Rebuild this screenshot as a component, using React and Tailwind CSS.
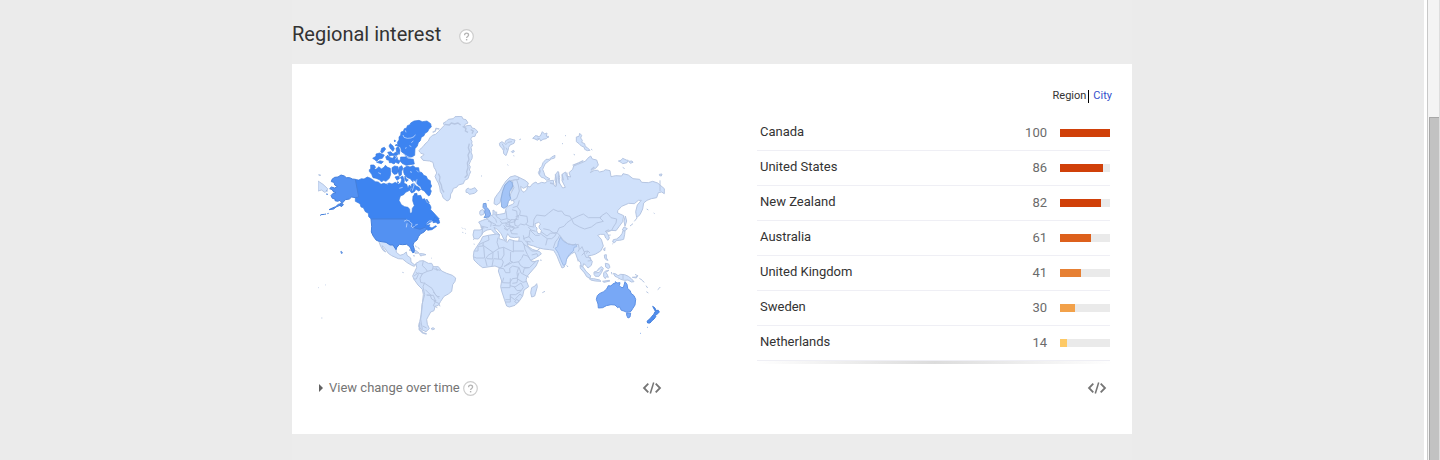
import React from "react";

const regions = [
  { name: "Canada", value: 100, color: "bg-[#d04009]" },
  { name: "United States", value: 86, color: "bg-[#d04009]" },
  { name: "New Zealand", value: 82, color: "bg-[#d04009]" },
  { name: "Australia", value: 61, color: "bg-[#dd601c]" },
  { name: "United Kingdom", value: 41, color: "bg-[#e68034]" },
  { name: "Sweden", value: 30, color: "bg-[#f2a14a]" },
  { name: "Netherlands", value: 14, color: "bg-[#fdc966]" },
];

function HelpButton({ label }) {
  return (
    <button type="button" aria-label={label} className="block shrink-0 cursor-pointer">
      <svg className="size-[15px]" viewBox="0 0 15 15" fill="none">
        <circle cx="7.5" cy="7.5" r="6.8" fill="#fff" stroke="#cdcdcd" strokeWidth="1.2" />
        <path d="M5.6 6.2c0-2.7 4-2.5 4-.3 0 1.5-2 1.5-2 3" stroke="#b3b3b3" strokeWidth="1.3" />
        <path d="M7.6 10v1.4" stroke="#b3b3b3" strokeWidth="1.4" />
      </svg>
    </button>
  );
}

function EmbedButton() {
  return (
    <button type="button" aria-label="Embed" className="block cursor-pointer">
      <svg className="h-3 w-5" viewBox="0 0 20 12" fill="none" stroke="#757575" strokeWidth="1.8">
        <path d="M6.3 1.6 2 6l4.3 4.4M13.7 1.6 18 6l-4.3 4.4" />
        <path d="M11.7.6 8.3 11.4" strokeWidth="1.5" />
      </svg>
    </button>
  );
}

function WorldMap() {
  return (
    <svg
      className="block h-[220px] w-full"
      viewBox="24 15 1050 660"
      role="img"
      aria-label="Interest by country"
      fill="#d0e1fb"
      stroke="#b6c6e2"
      strokeWidth="3"
      strokeLinejoin="round"
    >
      <defs>
        <filter id="coast" x="-5%" y="-5%" width="110%" height="110%">
          <feTurbulence type="fractalNoise" baseFrequency="0.25" numOctaves="2" seed="4" />
          <feDisplacementMap in="SourceGraphic" scale="4" xChannelSelector="R" yChannelSelector="G" />
        </filter>
      </defs>

      {/* Greenland, Iceland, Svalbard */}
      <g transform="translate(270 -2)" filter="url(#coast)">
        <path d="M133 45l-3-7 8-4 7-7 15-2 5-6 20-1 4 8 9 2 6 10-9 4-2 7 8-3 11-1 4 8 9 2 9 10-6 4-3 9-8 1-5 7 4 7-1 8 3 3-5 8 2 8-2 5 4 10-1 10-4 6-5 12 4 6-3 10 4 5-4 9-4 12-10 5-4 10-15 4-5 7-10 3-3 10-5 7-1 12-4 6-6 3-12-10-3-10-5-8-2-14-4-12-5-8-5-12 5-10-3-9-5-8-3-15-10-4-20-2-7-10 6-3 4-5-9-3-4-4-2-4 7-8 6-5 5-7 10-9 4-9 8-8 10-3 8-8z" />
        <path fill="none" strokeWidth="4" d="M115 190l5 10-2 12 6 12 2 12 6 10M208 100l-3 12 4 12-5 10 3 14-5 10 2 14-4 12 2 10-8 8M134 42l14 2 6-6 10 3 10-3 8 6M98 66l8-4 2-8 10 2M188 48l10 6-2 8 8 4M212 58l8 4-4 8" />
        <path d="M198 238l7-5 4 4 6-1 10-4 7 10-9 7-15 3-4-5-6-1zM298 99l8-5 8 6 3-9 12-6 10 3 6 1-3 10-12 5-4 7-2 9-6 16-7-6-1-10-5-8-5-4zM334 124l7-4 2 4-6 3zM358 88l5-2M340 136l3 1M322 163l3 2M243 196l3 2M400 82l12-6 8 8-8 6zM415 187l4-8v16z" />
        <path fill="none" d="M306 100l6 10 0 10M316 104l8-8 12-2M318 112l4 8" />
      </g>

      {/* Eurasian mainland */}
      <path d="M625 198l20 10 10 8-3 10-12 6-8-6 2 12 8 6 8-8 3-10 7 2 8-10 10-5 5 6 12-5 10 2 8-6 17-2 2 14 5 6 2-10-4-10 2-18 7-9 5 18-2 15 11 17 8-2-10-20 1-20 10-6 2 12 13 3-5-13 11-10 3-10 12-5 10-4 14-6 6-8 9-7 5 9 13 3 5 15-8 10-8 3-8 10 12-7 10 0 6 5 12-3 5-4 14 3 3 18 14-3 18 1 4-7 16 4 14 11 20 2 6 9 20 1 13-4 15 5 20 17v15l-8-5-10 2-5 15-16 3-13 5-10 8-3 18-8 17-10 9-3-18 5-20 12-14-9 0-12 10-17-1-21 9-12 13 0 7 18 8-3 18-11 15-9 12-14-1-17 3 8 11 3 9-4 7-7-7-4-11-12 0-8 3 11 12 6 20-8 15-15 9-12 4-10 1 3 7 9 10-3 12-10 8-6-8-7-5-3 10 8 15 5 8-10-8-7-15-3-15-7-5-6-17-4-8-9 5-11 10-8 13-3 17-7 3-8-18-7-18-4-7-6-10-12-2-18-2-18-4-12-5-15-4-5-8 3 13 13 9 22 7 5 7-18 12-20 10-8 2-7-14-10-18-7-16 2-13 2-14-15 2-13-2-7-10-5 13 2 8-8-3-8-17-12-14-10-6 5 10 13 13-6 7-9-11-12-13-12 2-11 6-5 9-10 12-13-1-3-11 3-15 18 0 6-2-4-13-6-9 12-5 14-5 7-8 10-3 0-15 7 5-1 10 14-2 16-3 3-15 7-7 13-5 4-5-3-20-4-20z" />
      <path fill="none" strokeWidth="4" d="M736 190l3 16 0 18M746 184l-1 18 4 16M756 190l4 18M770 185l4 22M788 163l20-8 12-6M843 176l10-8M720 216l12 3" />
      <g transform="translate(660 0)" filter="url(#coast)">
        <path d="M28 190l3-10-3-7 7-6 4-12 9-10 10 0 7-7 10-5-1 8-10 3-9 7-10 8-7 16 4 10 3 10 15 9-10 4-8-7-8-2zM139 92l0-14 8-2 2-9 6 6-3 8 5 7-2 6 9 4 2 9 5 2 9 9-8 1-8-4-2-7-8-3-7-7zM265 150l8-2 5-6 11 5 6 1-4 7-13 3-5-4zM296 151l10-1 3 4-8 3zM278 169l6 4M8 82l10-9 5 5 8-3 6-13 7 7 7-3-2 10 7 0-7 7-10 2-7 5-4-8-9 3zM52 80l5-2M96 98l3 0M105 75l3-2M131 130l4 2M183 114l4 3M388 190l8-1-2 6-5-1zM350 294l5 3M371 306l3 2" />
      </g>

      {/* Africa */}
      <g transform="translate(420 315)">
        <path d="M98 62l17-4 25-4 8 2-1 12 13 4 12 7 6-9 17 5 20 1 7 9 3 15 7 15 8 15 8 8 18-5-8 17-13 15-13 15-4 12 8 20-14 10-4 18-10 15-13 13-17 5-8-3-7-20-8-25-3-13 3-17-5-15-5-15 3-10-13-5-15 2-22 3-13-10-13-13-2-12 2-15 13-20 7-10z" />
        <path d="M260 203l2 9-8 28-9 3-3-13 3-15 10-5z" />
        <path fill="none" d="M115 58l2 14-16 7-15 7M100 79l-1 11-15 1v14H73M98 87l31 22 18-12-6-18 3-14M101 91l3 35H79l-7-3M129 109l-15 9-8 12 5 20M129 109l-1 20-17-1M147 97l14-3 29 14V73M190 105h32M161 94l1 23-8 13-23-2M130 130l-4 21M155 130l5 8-5 15-9 3M182 108l-1 27 7 4-25 12M181 135l9 5 17-3 7-9M215 127l5-11 13 4 11 15 13 2-19 18-18-1-9-6-5-10M162 152l18-13M148 156l13 2 6 12 13 0-1-13 9-7 18 4-5 16 2 16-16 2-8 13-22-1 4-15M207 154l6 17 24 13M207 170l-6 18 18 11 11-3M203 188l-2 12-14 2M181 187l-1 28h-26M180 209l15 4 18-12M213 201l7 13-8 12-15 10-16 0v15h-15M192 212l9 12 12-1M181 235v23l-16 0M181 241l13 10 16-17 6 5M194 257l6-7 7 5-6 7zM236 155l-13 2-4 15M144 105l2 24" />
        <path d="M36 35l3 3M44 38l3 2M69 69l3 2M71 84l3 1M270 132l5 1M277 230l8-4" />
      </g>

      {/* Latin America and the Caribbean */}
      <g transform="translate(0 315)">
        <path d="M205 72l10 2 9 3 16 3 18 13 1 16 11 9 10-3 9-7 2 10 11 8 1 12 10 8 5-2-5 7-8-3-15-9-12-10-13-1-20-9-10-7-9-13-9-10 1 6 9 13-8-5-7-12z" />
        <path d="M318 142l7-4 4-3 11-1 15 8 10 0 5 10 15 0 10 13 15 7 17 6 10 8-2 10-7 10-3 20-10 8-13 7-10 15-7 12-10 3-3 13-10 4-7 13-5 9 2 15 6 13-10 9-13-6-9-10 3-14 5-22 3-30 3-30-3-15-13-13-12-17-4-10 6-13 6-12z" />
        <path fill="none" d="M340 135l-3 14 10 9 5 8-15 7-7 14 2 12 12 3 22 15 9 17 12 14M312 180l12-9 15 3M352 166l15-4 3-12M370 158l21 5M378 155l4 10M317 168l8 7-6 14-8 0M344 200l-5 12 5 24-8 29-4 45 5 30M346 221l18 18-14-2M350 237l20 1 7 17-12-6-4-10M371 255l15 7 4 9M378 253l-8 16 12 6M350 336l-12-6M370 228l11 13 8 1" />
        <path fill="none" strokeWidth="5" d="M329 320l-1 20 10 10 12 4" />
        <path d="M297 102l12-2 9 4 9 7-12 1 0-3-12-5zM328 113l10 0 10 3-10 2-6 2zM315 89l5 4M323 94l6 5M309 119l6 1M364 126l2 2M363 338l7-3 4 4-6 2zM277 169l4 1M22 215l4 0M45 206l2 1M34 306l3 0M457 49l3 1M466 52l2 1" />
      </g>

      {/* South-east Asia, Japan, Pacific */}
      <g transform="translate(720 315)">
        <path d="M188 78l2-7 10-2 10-8 6-8 3-9 6 1-1 10-3 15-12 3-9 0-6 7zM217 42l5-9 10 5-8 7zM226 0l4 15-5 16-3-16zM160 100l5-5-1 10zM90 148l10 6 8 12 14 13-2 8-10-5-7-12-12-13zM118 188l13 0 18 4 4 4-17-1-14-3zM132 168l8-2 8-10 6-4 6 5-5 12-8 12-11 0-4-6zM161 170l6-5 10-2-10 6 4 5 4 10-6-2-3 6-5-6zM163 117l6-1 0 10 5 7-5-1-5-6zM166 142l10 2 4 10-5 4-8-5zM190 172l8 2 6 5 8-4 12 1 11 5 9 7 8 9-8 1-10-6-10 1-12-3-10-6-7-3zM247 184l10-1 6-4-4 7zM158 196l20-3 2 2-18 4zM184 168l2 7M255 175l9 5M268 187l8 5M276 193l7 6M288 209l5 7M289 227l6 4M323 221l5-4M327 217l4-4M50 148l4 5M84 130l0 6M208 187l-3 3M187 84l3-2M240 30l9-7M253 16l8-10M219 176v14M134 171l14-2 8-10" />
      </g>

      {/* Eastern tip of Russia, west of the date line */}
      <path d="M24 210l15 10 14 13-3 8-6 3-9-7-11 3zM26 191l6 1-3 3z" />

      {/* Scandinavia, British Isles, European borders */}
      <g transform="translate(270 0)">
        <path d="M282 278l2-16 8-12 8-10 8-15 10-15 12-12 15-4 10 4 2 7-19 3-13 2-10 12-7 18-5 22-3 13-10 7z" />
        <path d="M338 208l12-2 5 16 3 18-8 22-15 8-5-8 2-14 10-18-4-10z" />
        <path fill="#a3c4f7" stroke="#8eafe0" d="M328 210l8 3 2 12-8 15-2 12 4 10-7 10-3 13-10 7-7-4-2-23 5-23 7-20z" />
        <path d="M240 300l8-5 5 8-2 7-9 3-3-5z" />
        <path fill="#8fb5f3" stroke="#739fe0" d="M250 278l8-1 1 11 8 8 5 14-6 8-14 2 5-8-3-8 1-8-6-7zM264 268l2 2" />
        <path fill="none" d="M258 322l18 13 12 6M278 316l9 9 3 10M290 302l0 15 14 10 17-4-3-24M300 329l6 8 20-2 7-9 13 0 6-8-2-18-14-4M321 323l12 5M338 290l15-5 5-17M351 286l10 14-2 12-12 5M360 313l21 3 2 17-9 9-12-3-8 7-9-3-2-16 13-3M335 325l-8 10 4 12 12 5 13-3M306 337l-7 8-21-2M318 337l0 8 13 3M242 349l11 2M356 320l-2-8M312 352l8 5 11-7M331 355l4 13 18 1" />
      </g>

      {/* India */}
      <path fill="#bbd3fa" stroke="#a0bce8" d="M751 379l10 12 14 8 14 3 9-3 2 8-8 2-2 11-12 10-8 13-3 17-7 3-8-18-7-18-4-7-6-8 8-5 2-13 3-7z" />

      {/* Asian borders */}
      <g fill="none">
        <path d="M670 345l2-20 8-13 25 3 10-8 15-12 14 6 11-1 9 12 16 4 5 9 20-10 15-6 15 11 35 0 5-6 14-9 6 5 8 10 17 4-2 12-8 12-5 10-15 6" />
        <path d="M785 325l6 13 18 10 15 6 20-6 16-12 20-5-10-10 5-6M785 325l-14 10-9 11-15 5-6 14-20 2-10 8-7-5-16-12-6 0M694 370l18 13 13 0 9-7 5-9M741 365l10 10 8 12 16 12 20 3 10-2 3 14-4 8M730 411l6-18 9-12 4-9M712 383l-5 20M660 357l9 9 7 7 13 0M660 357l-3 20-17 6M657 377l13 16M645 390l17 3M640 400l10 5 15 15 15 0 10-8M665 432l16-4 3 8M810 415l6-8 6 15 12-2 6 6M822 425l6 14 13 0 2 10-10 1M825 423l-10 10M834 420l-5 8M885 362l11-6M895 373l7-1M648 340l11 6 14 2M655 348l8 9 14 4M1050 208v32M700 353l18 4 14 10 9-2" />
        <path d="M591 329l10 6 14-3 5-12M600 360l9-3 4-9-14-4-12-8M581 343l6 8 6 8M512 345l22 5M518 349l-2 21M534 330l10 5-2 12M640 373l3 15" />
      </g>
      <path fill="#fff" d="M675 338l11-4 6 5-5 6 1 7 6 6-2 11-9-2-3-8 1-8-5-5z" />

      {/* Canada */}
      <g fill="#3d84f1" stroke="#3a7be0" strokeWidth="2">
        <path d="M136 205l10 2 8-4 8 1 10-6 8 3 8 5 8 6 9 1 8 7 8-3 7 2 10-3 8 3 10-5 9 6 7-4 3-10-4-7 7-4 5 12-1 10 8 3 4 12 4-10 6 6-5 10-12 6-6 7-10 4-4 13 7 13 10 6 10 2 5 6 1 12 6-2 1-13 6-8-5-15 1-14 10-7 5 6 8-1 5 12 7-2 5 10 10 7 4 8-1 8 7 7L388 324 380 328 368 330 357 336 347 343 360 341 357 347 366 351 377 344 380 346 366 356 353 358 345 350 330 356 312 352 300 340 286 325H184l-8-8-1-10-9-5-6-12-7-2-3-10-14-7zM370 329l5-12 7 7 5 3 2 9-6 2-5-4-9 1z" />
        <g filter="url(#coast)">
          <path d="M302 36l10-6 15-2 10 4 14-2 11 8 2 10-7 6-4 8-8 5-3 7-8 5-3 10-6 6-3 10-7 8-1 20-12 7-14-3-5-9-8-5-3-13-8-6-2-10 5-7 0-9 5-6 1-9 7-2 3-8 7-2 2-7 8-3z" />
          <path d="M272 138l15 0 8 5 15 2 3 14-13 2-12 2-12-6-6-8zM178 176l8-5 12 4 9-8 7 7 8-5 4-6 7 6 8 3 1 18-4 12-10 9-8-3-5 5-7-7-10-4-9-2-4-10-7-9zM182 162l10 0 5 7-6 5-9-1zM188 142l10-6 0-7 11-3 6 3 8 3-6 10-10 2-7 7-6-5zM212 122l3-10 8-3 4 5-6 8-5 5zM200 154l10-5 10 3-6 6zM237 105l4-7 8 7 4 8-4 8-7-7zM233 124l9-2 7 7 9-6 7 7-9 5-10-2-7 2zM258 112l7-6 5 12-2 12-8-7zM255 103l6-3 3 5zM253 87l4 2-3 4zM227 137l8-3 6 6 8 2 4-8 8 3 2 9 7 4-4 8-9-4-5 5-8-4-6 0-1-7-7-2zM246 170l8-5 10 2 2 13-6 9-8 1-6-8zM268 168l7-4 4 8-4 9-1 11-6 4-3-13zM255 198l10-3 4 7-8 6zM262 212l5 2-4 4z" />
          <path d="M281 172l10-7 9 3 9-4 8 6 9 0 2 12 8 3 5 8 8 3 4 9 8 4 1 10 3 6-5 9 4 6-4 12-4 3-6-6-7-9-8-4-3-9-7-4-6-7-3-8-8 4-7-9-9-3-8-8-3-8zM304 220l8-3 6 8 8 3 6 8-6 4-8-5-5 7-8 4-5-7 5-7zM350 264l4 6 4 6-8-5zM285 195l4 9 6 3-6 5-5-9zM313 248l8-1-2 5-6 0z" />
        </g>
      </g>

      {/* United States */}
      <g fill="#5391f2" stroke="#447fdb">
        <path d="M136 205l-9-1-8-4-10 0-6-5-10-3-9 6-10 1-8 6-2 7 8 2 2 8 8 5-8 4-10-3-5 5 8 3 2 5 9 4-9 2-6 7 4 8 8 2 0 5 8 2 7-3 4 6-4 5-5 1-8 7-10 4-10 5 14-2 7-6 12-5 10-10 6-7 12-2 7-6 11 2 10-2zM44 310l4-1M52 308l4-1M30 312l3 1M33 311l11-1M48 249l6 1M50 239l2 1M91 282l7-4 2 4-7 5z" />
        <path d="M183 324H286L300 338 312 350 330 355 345 349 350 354 341 364 332 368 326 376 321 387 312 394 309 402 313 415 312 424 308 425 303 414 299 407 290 400 278 401 268 400 260 410 258 416 249 402 240 402 228 394 208 391 199 388 190 376 184 363 185 346z" />
        <path strokeWidth="5" d="M92 421l2 2M94 424l3 3" />
      </g>
      <g fill="none" stroke="#dbe8fd" strokeWidth="2">
        <path d="M279 72l3 7 10 3 11-1 9-4 4-6M272 128l13 4 12 7 14 1M254 134l6 4-4 7M310 208l2 15-5 16M321 205l-3 12 6 9M282 331l8-4 10 4M291 337l-2 12M299 333l7 5-2 10M306 350l8-4M315 343l8-3M350 337l8-7 8 0M268 232l10-3M226 217l8 2M286 58l2 6M298 104l6 3M310 90l-6 5M285 112l5-2M205 185l8 4M320 178l6 6M300 182l6 2" />
      </g>

      {/* Oceania */}
      <g transform="translate(720 315)" fill="#78a8f6" stroke="#5e91e4">
        <path d="M142 239l6-6 13-6 9-8 5-10 8 1 6-7 6 0 1-6 5 4 9-1-2 9 5 5 7 1 5-18 6 8 2 12 8 8 2 7 9 7 5 11-2 17-7 11-5 8-13 3-8-4-8-2-6-11-5 3-8-8-12-1-14 3-11 6-13 1-1-12-5-14zM230 291l12 0-2 12-6 3-4-8z" />
        <path fill="#4f8def" stroke="#437fdc" d="M308 271l7 5 2 7 8 0 3 5-10 10-6-5 4-7zM311 295l7 6-6 8-7 6-5 6-7 0-2-5 10-9z" />
        <path d="M270 352l2 0M291 334l2 0" />
      </g>
    </svg>
  );
}

export default function App() {
  return (
    <div className="flex min-h-screen bg-[#ebebeb] font-[Roboto,sans-serif] text-[13px] leading-5 text-[#333]">
      <main className="flex min-w-0 flex-1 justify-center">
        <section className="w-full max-w-[840px] bg-[#ececec] pb-6">
          <header className="flex h-16 items-start gap-[18px] pt-[22px]">
            <h2 className="text-xl leading-6">Regional interest</h2>
            <div className="pt-[7px]">
              <HelpButton label="Help: Regional interest" />
            </div>
          </header>

          <div className="flex justify-between bg-white pb-9 pl-[26px] pr-5 pt-6">
            <div className="flex w-[350px] flex-col justify-between pt-7">
              <WorldMap />
              <div className="flex items-center justify-between pr-[6px]">
                <div className="flex items-center gap-[3px] text-[#757575]">
                  <button type="button" className="flex cursor-pointer items-center gap-[6px]">
                    <svg className="h-2 w-[5px]" viewBox="0 0 5 8" fill="#616161">
                      <path d="M1 0v8l4-4z" />
                    </svg>
                    View change over time
                  </button>
                  <HelpButton label="Help: change over time" />
                </div>
                <EmbedButton />
              </div>
            </div>

            <div className="flex w-[355px] flex-col">
              <nav className="flex h-4 items-center justify-end text-[11px] leading-4">
                <span>Region</span>
                <span className="ml-[2px] mr-1 h-[13px] border-l border-black" />
                <a href="#city" className="text-[#3350cc]">
                  City
                </a>
              </nav>
              <table className="mr-[2px] mt-3 border-separate border-spacing-0">
                <tbody>
                  {regions.map((r) => (
                    <tr key={r.name}>
                      <th
                        scope="row"
                        className="h-[35px] border-b border-[#efeff5] p-0 pb-[2px] pl-[3px] text-left font-normal"
                      >
                        {r.name}
                      </th>
                      <td className="h-[35px] w-12 border-b border-[#efeff5] p-0 pr-[13px] text-right text-[#6b6b6b]">
                        {r.value}
                      </td>
                      <td className="h-[35px] w-[50px] border-b border-[#efeff5] p-0">
                        <div className="h-2 bg-[#eaeaea]">
                          <div className={`h-2 ${r.color}`} style={{ width: `${r.value}%` }} />
                        </div>
                      </td>
                    </tr>
                  ))}
                </tbody>
              </table>
              <div className="h-[3px] bg-linear-to-r from-white via-[#dcdcdc] to-white" />
              <div className="mt-[14px] flex h-5 items-center justify-end pr-[5px]">
                <EmbedButton />
              </div>
            </div>
          </div>
        </section>
      </main>

      <div className="flex w-4 shrink-0 border-r border-[#dedede] bg-[#f4f4f4]" aria-hidden="true">
        <div className="w-1 border-r border-[#c8c8c8] bg-white" />
        <div className="flex flex-1 flex-col pl-px pt-[117px]">
          <div className="flex-1 border-l border-t border-[#a8a8a8] bg-[#c2c2c2]" />
        </div>
      </div>
    </div>
  );
}
